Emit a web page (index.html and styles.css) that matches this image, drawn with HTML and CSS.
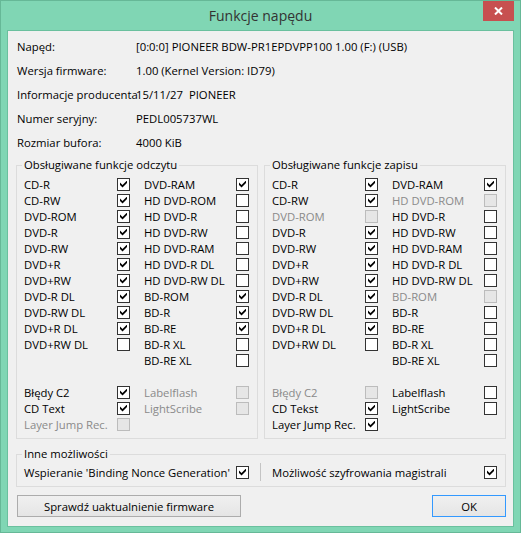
FILE: index.html
```html
<!DOCTYPE html>
<html lang="pl">
<head>
<meta charset="utf-8">
<title>Funkcje napędu</title>
<link rel="stylesheet" href="styles.css">
</head>
<body>
<div class="window">
  <div class="titlebar">
    <div></div>
    <div class="title">Funkcje napędu</div>
    <div class="tb-right">
      <button class="close" aria-label="Zamknij"><svg width="9" height="8" viewBox="0 0 9 8"><path d="M1 0.5 L8 7.5 M8 0.5 L1 7.5" stroke="#fff" stroke-width="2"/></svg></button>
    </div>
  </div>
  <div class="panel">
    <div class="info">
      <span>Napęd:</span><span class="val">[0:0:0] PIONEER BDW-PR1EPDVPP100 1.00 (F:) (USB)</span>
      <span>Wersja firmware:</span><span class="val">1.00 (Kernel Version: ID79)</span>
      <span>Informacje producenta</span><span class="val">15/11/27  PIONEER</span>
      <span>Numer seryjny:</span><span class="val">PEDL005737WL</span>
      <span>Rozmiar bufora:</span><span class="val">4000 KiB</span>
    </div>

    <div class="groups">
      <fieldset class="group">
        <legend>Obsługiwane funkcje odczytu</legend>
        <div class="opts">
          <div class="opt"><span>CD-R</span><span class="cb on"></span></div>
          <div class="opt"><span>DVD-RAM</span><span class="cb on"></span></div>
          <div class="opt"><span>CD-RW</span><span class="cb on"></span></div>
          <div class="opt"><span>HD DVD-ROM</span><span class="cb"></span></div>
          <div class="opt"><span>DVD-ROM</span><span class="cb on"></span></div>
          <div class="opt"><span>HD DVD-R</span><span class="cb"></span></div>
          <div class="opt"><span>DVD-R</span><span class="cb on"></span></div>
          <div class="opt"><span>HD DVD-RW</span><span class="cb"></span></div>
          <div class="opt"><span>DVD-RW</span><span class="cb on"></span></div>
          <div class="opt"><span>HD DVD-RAM</span><span class="cb"></span></div>
          <div class="opt"><span>DVD+R</span><span class="cb on"></span></div>
          <div class="opt"><span>HD DVD-R DL</span><span class="cb"></span></div>
          <div class="opt"><span>DVD+RW</span><span class="cb on"></span></div>
          <div class="opt"><span>HD DVD-RW DL</span><span class="cb"></span></div>
          <div class="opt"><span>DVD-R DL</span><span class="cb on"></span></div>
          <div class="opt"><span>BD-ROM</span><span class="cb on"></span></div>
          <div class="opt"><span>DVD-RW DL</span><span class="cb on"></span></div>
          <div class="opt"><span>BD-R</span><span class="cb on"></span></div>
          <div class="opt"><span>DVD+R DL</span><span class="cb on"></span></div>
          <div class="opt"><span>BD-RE</span><span class="cb on"></span></div>
          <div class="opt"><span>DVD+RW DL</span><span class="cb"></span></div>
          <div class="opt"><span>BD-R XL</span><span class="cb"></span></div>
          <div class="opt"></div>
          <div class="opt"><span>BD-RE XL</span><span class="cb"></span></div>
          <div class="opt"></div>
          <div class="opt"></div>
          <div class="opt"><span>Błędy C2</span><span class="cb on"></span></div>
          <div class="opt dis"><span>Labelflash</span><span class="cb"></span></div>
          <div class="opt"><span>CD Text</span><span class="cb on"></span></div>
          <div class="opt dis"><span>LightScribe</span><span class="cb"></span></div>
          <div class="opt dis"><span>Layer Jump Rec.</span><span class="cb"></span></div>
          <div class="opt"></div>
        </div>
      </fieldset>

      <fieldset class="group">
        <legend>Obsługiwane funkcje zapisu</legend>
        <div class="opts">
          <div class="opt"><span>CD-R</span><span class="cb on"></span></div>
          <div class="opt"><span>DVD-RAM</span><span class="cb on"></span></div>
          <div class="opt"><span>CD-RW</span><span class="cb on"></span></div>
          <div class="opt dis"><span>HD DVD-ROM</span><span class="cb"></span></div>
          <div class="opt dis"><span>DVD-ROM</span><span class="cb"></span></div>
          <div class="opt"><span>HD DVD-R</span><span class="cb"></span></div>
          <div class="opt"><span>DVD-R</span><span class="cb on"></span></div>
          <div class="opt"><span>HD DVD-RW</span><span class="cb"></span></div>
          <div class="opt"><span>DVD-RW</span><span class="cb on"></span></div>
          <div class="opt"><span>HD DVD-RAM</span><span class="cb"></span></div>
          <div class="opt"><span>DVD+R</span><span class="cb on"></span></div>
          <div class="opt"><span>HD DVD-R DL</span><span class="cb"></span></div>
          <div class="opt"><span>DVD+RW</span><span class="cb on"></span></div>
          <div class="opt"><span>HD DVD-RW DL</span><span class="cb"></span></div>
          <div class="opt"><span>DVD-R DL</span><span class="cb on"></span></div>
          <div class="opt dis"><span>BD-ROM</span><span class="cb"></span></div>
          <div class="opt"><span>DVD-RW DL</span><span class="cb on"></span></div>
          <div class="opt"><span>BD-R</span><span class="cb"></span></div>
          <div class="opt"><span>DVD+R DL</span><span class="cb on"></span></div>
          <div class="opt"><span>BD-RE</span><span class="cb"></span></div>
          <div class="opt"><span>DVD+RW DL</span><span class="cb"></span></div>
          <div class="opt"><span>BD-R XL</span><span class="cb"></span></div>
          <div class="opt"></div>
          <div class="opt"><span>BD-RE XL</span><span class="cb"></span></div>
          <div class="opt"></div>
          <div class="opt"></div>
          <div class="opt dis"><span>Błędy C2</span><span class="cb"></span></div>
          <div class="opt"><span>Labelflash</span><span class="cb"></span></div>
          <div class="opt"><span>CD Tekst</span><span class="cb on"></span></div>
          <div class="opt"><span>LightScribe</span><span class="cb"></span></div>
          <div class="opt"><span>Layer Jump Rec.</span><span class="cb on"></span></div>
          <div class="opt"></div>
        </div>
      </fieldset>
    </div>

    <fieldset class="other">
      <legend>Inne możliwości</legend>
      <div class="other-row">
        <div class="pair"><span>Wspieranie 'Binding Nonce Generation'</span><span class="cb on"></span></div>
        <div class="sep"></div>
        <div class="pair"><span>Możliwość szyfrowania magistrali</span><span class="cb on"></span></div>
      </div>
    </fieldset>

    <div class="buttons">
      <button class="btn wide">Sprawdź uaktualnienie firmware</button>
      <button class="btn ok">OK</button>
    </div>
  </div>
</div>
</body>
</html>
```

FILE: styles.css
```css
html, body {
  margin: 0;
  padding: 0;
}

body {
  width: 521px;
  height: 533px;
  font-family: "Open Sans", "Noto Sans", sans-serif;
  font-size: 11.3px;
  color: #000;
  overflow: hidden;
}

.window {
  box-sizing: border-box;
  width: 521px;
  height: 533px;
  background: #80d6b4;
  border: 1px solid #66b897;
  padding: 0 6px 5px;
  display: flex;
  flex-direction: column;
}

.titlebar {
  height: 29px;
  flex: none;
  display: grid;
  grid-template-columns: 1fr auto 1fr;
}

.title {
  font-size: 14px;
  line-height: 29px;
  color: #333;
}

.tb-right {
  display: flex;
  justify-content: flex-end;
  align-items: flex-start;
}

.close {
  width: 31px;
  height: 20px;
  border: 0;
  padding: 0;
  margin: 0;
  background: #c75050;
  display: flex;
  align-items: center;
  justify-content: center;
}

.close svg {
  display: block;
}

.panel {
  flex: 1;
  background: #f0f0f0;
  border: 1px solid #6ac09e;
  padding: 3px 0 0;
  display: flex;
  flex-direction: column;
}

.info {
  display: grid;
  grid-template-columns: 119px auto;
  grid-auto-rows: 24px;
  align-items: center;
  margin-left: 9px;
  white-space: pre;
}

.groups {
  display: grid;
  grid-template-columns: 242px 242px;
  column-gap: 6px;
  margin: 3px 0 0 8px;
}

fieldset {
  margin: 0;
  min-width: 0;
  border: 1px solid #dcdcdc;
  box-sizing: border-box;
}

legend {
  padding: 0 2px;
  margin-left: -2px;
  line-height: 16px;
}

.group {
  padding: 3px 0 6px 7px;
}

.opts {
  display: grid;
  grid-template-columns: 106px 105px;
  column-gap: 14px;
  grid-auto-rows: 16px;
}

.opt {
  display: flex;
  align-items: center;
  justify-content: space-between;
  white-space: nowrap;
}

.dis {
  color: #8a8a8a;
}

.cb {
  position: relative;
  flex: none;
  box-sizing: border-box;
  width: 13px;
  height: 13px;
  border: 1px solid #333;
  background: #fff;
}

.dis .cb {
  border-color: #bcbcbc;
  background: #e6e6e6;
}

.cb.on::after {
  content: "";
  position: absolute;
  left: 2px;
  top: 2px;
  width: 7px;
  height: 7px;
  background: #000;
  clip-path: polygon(0 28%, 36% 64%, 100% 0, 100% 36%, 36% 100%, 0 64%);
}

.other {
  width: 490px;
  margin: 7px 0 0 8px;
  padding: 1px 0 5px 7px;
}

.other-row {
  display: flex;
  align-items: center;
  height: 18px;
}

.pair {
  width: 225px;
  display: flex;
  align-items: center;
  justify-content: space-between;
  white-space: nowrap;
}

.sep {
  width: 1px;
  height: 18px;
  background: #c4c4c4;
  margin: 0 11px;
}

.buttons {
  display: flex;
  justify-content: space-between;
  margin: 8px 7px 0 9px;
}

.btn {
  height: 22px;
  box-sizing: border-box;
  border: 1px solid #acacac;
  background: linear-gradient(#f0f0f0, #e5e5e5);
  font: inherit;
  color: #000;
  padding: 0;
  margin: 0;
}

.btn.wide {
  width: 224px;
}

.btn.ok {
  width: 74px;
  border-color: #3399ff;
}
```
